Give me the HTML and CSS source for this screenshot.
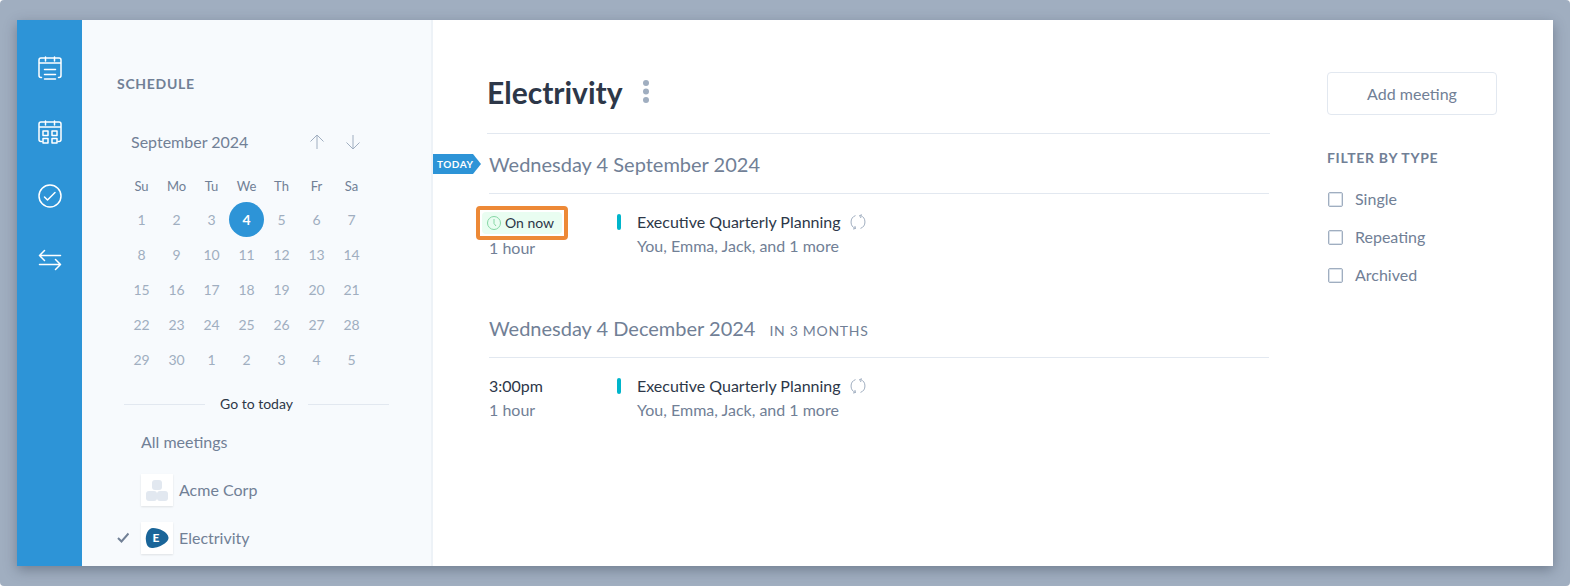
FILE: index.html
```html
<!DOCTYPE html>
<html lang="en">
<head>
<meta charset="utf-8">
<meta name="viewport" content="width=device-width, initial-scale=1">
<title>Schedule – Electrivity</title>
<link rel="stylesheet" href="styles.css">
</head>
<body>
<svg class="symbols" aria-hidden="true">
  <symbol id="repeat" viewBox="0 0 16 16">
    <path d="M5.500 14.500A6.900 6.900 0 0 1 5.500 1.600M10.500 1.500A6.900 6.900 0 0 1 10.500 14.400M3 15l2.500-.5-.6-2.500M11 4l-1.500-2.500L12 .8"/>
  </symbol>
</svg>
<div class="app">
  <nav class="rail" aria-label="Main">
    <a href="#schedule" aria-label="Schedule"><svg viewBox="0 0 24 24"><path d="M3.500 21.500H3a2 2 0 0 1-2-2V4a2 2 0 0 1 2-2h18a2 2 0 0 1 2 2v15.500a2 2 0 0 1-2 2h-.5M1 7h22M7.500 1v4M16.500 1v4M6.500 13.500h11M6.500 18.500h11M6.500 23h11"/></svg></a>
    <a href="#calendar" aria-label="Calendar"><svg viewBox="0 0 24 24"><path d="M3.500 21.500H3a2 2 0 0 1-2-2V4a2 2 0 0 1 2-2h18a2 2 0 0 1 2 2v15.500a2 2 0 0 1-2 2h-.5M1 7h22M7.500 1v4M16.500 1v4M5 11h5v4.500H5zM14 11h5v4.500h-5zM5 18.500h5V23H5zM14 18.500h5V23h-5z"/></svg></a>
    <a href="#tasks" aria-label="Tasks"><svg viewBox="0 0 24 24"><circle cx="12" cy="12" r="11"/><path d="M6.500 13l3 3L17 8.500"/></svg></a>
    <a href="#transfer" aria-label="Switch"><svg viewBox="0 0 24 24"><path d="M22.500 7.500h-21M6.500 2.500l-5 5 5 5M1.500 16.500h21M17.500 11.500l5 5-5 5"/></svg></a>
  </nav>

  <aside class="sidebar">
    <h2 class="label">SCHEDULE</h2>
    <div class="month">
      <span class="month-name">September 2024</span>
      <button class="arrow" type="button" aria-label="Previous month"><svg viewBox="0 0 16 16"><path d="M8 15V1M1.500 7.500L8 1l6.500 6.500"/></svg></button>
      <button class="arrow" type="button" aria-label="Next month"><svg viewBox="0 0 16 16"><path d="M8 1v14M1.500 8.500L8 15l6.500-6.500"/></svg></button>
    </div>
    <table class="calendar">
      <thead><tr><th>Su</th><th>Mo</th><th>Tu</th><th>We</th><th>Th</th><th>Fr</th><th>Sa</th></tr></thead>
      <tbody>
        <tr><td>1</td><td>2</td><td>3</td><td class="selected">4</td><td>5</td><td>6</td><td>7</td></tr>
        <tr><td>8</td><td>9</td><td>10</td><td>11</td><td>12</td><td>13</td><td>14</td></tr>
        <tr><td>15</td><td>16</td><td>17</td><td>18</td><td>19</td><td>20</td><td>21</td></tr>
        <tr><td>22</td><td>23</td><td>24</td><td>25</td><td>26</td><td>27</td><td>28</td></tr>
        <tr><td>29</td><td>30</td><td>1</td><td>2</td><td>3</td><td>4</td><td>5</td></tr>
      </tbody>
    </table>
    <div class="go-today"><button type="button">Go to today</button></div>
    <ul class="orgs">
      <li><a href="#all">All meetings</a></li>
      <li><a href="#acme"><span class="tile"><svg viewBox="0 0 32 32"><g fill="#e2e8f0"><rect x="11" y="6" width="10" height="10" rx="3"/><rect x="5" y="17" width="11" height="10" rx="3"/><rect x="16" y="17" width="11" height="10" rx="3"/></g></svg></span>Acme Corp</a></li>
      <li><svg class="tick" viewBox="0 0 12 12"><path d="M1 6l3.500 3.500L11.500 1.500"/></svg><a href="#electrivity"><span class="tile"><svg viewBox="0 0 32 32"><path d="M5 19C4 13 7 6 12 6c6 0 15 4 15.500 9.500C28 21 17 26 11 26c-4 0-5.500-3-6-7z" fill="#1a6599"/><text class="logo-letter" x="15" y="20" text-anchor="middle">E</text></svg></span>Electrivity</a></li>
    </ul>
  </aside>

  <main class="main">
    <div class="agenda">
      <header class="title-row">
        <h1>Electrivity</h1>
        <button class="more" type="button" aria-label="More options"><svg viewBox="0 0 6 23"><circle cx="3" cy="3" r="3"/><circle cx="3" cy="11.500" r="3"/><circle cx="3" cy="20" r="3"/></svg></button>
      </header>

      <section class="day">
        <h2 class="day-title"><span class="today">TODAY</span>Wednesday 4 September 2024</h2>
        <article class="event">
          <div class="when">
            <span class="highlight"><span class="on-now"><svg viewBox="0 0 14 14"><circle cx="7" cy="7" r="6.500"/><path d="M7 3v4.500l2 2.500"/></svg>On now</span></span>
            <span class="muted">1 hour</span>
          </div>
          <span class="bar"></span>
          <div class="what">
            <a class="event-name" href="#event-1">Executive Quarterly Planning<svg><use href="#repeat"/></svg></a>
            <span class="muted">You, Emma, Jack, and 1 more</span>
          </div>
        </article>
      </section>

      <section class="day">
        <h2 class="day-title">Wednesday 4 December 2024<small>IN 3 MONTHS</small></h2>
        <article class="event">
          <div class="when">
            <span>3:00pm</span>
            <span class="muted">1 hour</span>
          </div>
          <span class="bar"></span>
          <div class="what">
            <a class="event-name" href="#event-2">Executive Quarterly Planning<svg><use href="#repeat"/></svg></a>
            <span class="muted">You, Emma, Jack, and 1 more</span>
          </div>
        </article>
      </section>
    </div>

    <div class="tools">
      <button class="add" type="button">Add meeting</button>
      <fieldset class="filters">
        <legend class="label">FILTER BY TYPE</legend>
        <label><input type="checkbox">Single</label>
        <label><input type="checkbox">Repeating</label>
        <label><input type="checkbox">Archived</label>
      </fieldset>
    </div>
  </main>
</div>
</body>
</html>
```
FILE: styles.css
```css
* { box-sizing: border-box; }
html { background: #fff; }
body {
  margin: 0;
  min-height: 100vh;
  padding: 20px 17px;
  display: flex;
  font-family: Lato, "Open Sans", sans-serif;
  font-size: 16px;
  line-height: 24px;
  color: #2d3748;
  background: #a0aec0;
  border-radius: 4px;
}
h1, h2, ul { margin: 0; padding: 0; font-weight: 400; }
ul { list-style: none; }
a { color: inherit; text-decoration: none; }
button {
  padding: 0;
  border: 0;
  background: none;
  font: inherit;
  color: inherit;
  cursor: pointer;
}
svg { display: block; fill: none; stroke: none; flex: none; }
.symbols { position: absolute; width: 0; height: 0; }

.app {
  flex: 1;
  display: flex;
  background: #fff;
  box-shadow: 0 4px 12px rgba(45, 55, 72, 0.4);
}

/* Icon rail */
.rail {
  flex: none;
  width: 65px;
  padding-top: 36px;
  display: flex;
  flex-direction: column;
  align-items: center;
  gap: 40px;
  background: #2d94d7;
}
.rail svg {
  width: 24px;
  height: 24px;
  stroke: #fff;
  stroke-width: 1.5;
  stroke-linecap: round;
  stroke-linejoin: round;
}

/* Sidebar */
.sidebar {
  flex: none;
  width: 351px;
  padding: 52px 42px 0 35px;
  border-right: 2px solid #edf2f7;
  background: #f7fafd;
  color: #718096;
}
.label {
  font-size: 14px;
  font-weight: 700;
  letter-spacing: 0.05em;
  color: #718096;
}
.month {
  display: flex;
  align-items: center;
  gap: 20px;
  margin: 34px 20px 0 14px;
  padding-right: 8px;
}
.month-name { flex: 1; }
.arrow svg { width: 16px; height: 16px; stroke: #a0aec0; }
.calendar {
  margin: 16px 0 0 7px;
  border-collapse: collapse;
  table-layout: fixed;
  width: 245px;
  text-align: center;
}
.calendar th { height: 32px; padding: 0; font-size: 13px; font-weight: 400; }
.calendar td { height: 35px; padding: 0; font-size: 14px; color: #a0aec0; }
.calendar .selected { border-radius: 50%; background: #2d94d7; color: #fff; font-weight: 700; }
.go-today {
  display: flex;
  align-items: center;
  gap: 15px;
  margin: 15px 0 0 7px;
  font-size: 14px;
  color: #2d3748;
}
.go-today::before, .go-today::after { content: ""; flex: 1; height: 1px; background: #e2e8f0; }
.orgs { margin-top: 10px; }
.orgs li {
  display: flex;
  align-items: center;
  min-height: 32px;
  margin-bottom: 16px;
  padding-left: 24px;
}
.orgs a { display: flex; align-items: center; gap: 6px; }
.tile { width: 32px; height: 32px; background: #fff; box-shadow: 0 1px 2px rgba(0, 0, 0, 0.1); }
.tile svg { width: 32px; height: 32px; }
.logo-letter { fill: #fff; font-size: 12px; font-weight: 900; }
.tick { width: 12px; height: 12px; margin: 0 12px 0 -24px; stroke: #718096; stroke-width: 2; }
.orgs li:last-child { margin-bottom: 0; }

/* Agenda */
.main { flex: 1; display: flex; gap: 57px; padding: 52px 56px 0 54px; }
.agenda { flex: 1; min-width: 0; }
.title-row {
  display: flex;
  align-items: center;
  gap: 20px;
  height: 62px;
  padding-bottom: 22px;
  border-bottom: 1px solid #e2e8f0;
}
h1 { font-size: 30px; line-height: 40px; font-weight: 700; }
.more svg { width: 6px; height: 23px; fill: #a0aec0; }
.day { margin: 0 1px 0 2px; }
.day-title {
  position: relative;
  display: flex;
  align-items: baseline;
  gap: 14px;
  height: 60px;
  padding-top: 15px;
  line-height: 30px;
  font-size: 20px;
  color: #718096;
  border-bottom: 1px solid #e2e8f0;
}
.day-title small { font-size: 14px; letter-spacing: 0.05em; }
.today {
  position: absolute;
  top: 20px;
  left: -56px;
  width: 48px;
  padding-left: 4px;
  background: #2d94d7;
  clip-path: polygon(0 0, 40px 0, 100% 50%, 40px 100%, 0 100%);
  color: #fff;
  font-size: 10px;
  line-height: 20px;
  font-weight: 700;
  letter-spacing: 0.05em;
}
.event { display: flex; padding: 16px 0 38px; }
.when { width: 128px; display: flex; flex-direction: column; align-items: flex-start; }
.highlight {
  margin: -4px 0 -4px -13px;
  padding: 2px;
  border: 4px solid #ed8936;
  border-radius: 4px;
}
.on-now {
  display: flex;
  align-items: center;
  gap: 4px;
  padding: 0 8px 0 5px;
  border-radius: 4px;
  background: #e9fdf1;
  font-size: 14px;
  line-height: 22px;
}
.on-now svg { width: 14px; height: 14px; stroke: #85d6a4; }
.bar { width: 4px; height: 16px; margin: 4px 16px 0 0; border-radius: 2px; background: #00b5cb; }
.what { display: flex; flex-direction: column; }
.event-name { display: flex; align-items: center; gap: 9px; }
.event-name svg { width: 16px; height: 16px; stroke: #a0aec0; }
.muted { color: #718096; }

/* Tools */
.tools { flex: none; width: 170px; }
.add {
  width: 100%;
  height: 43px;
  border: 1px solid #e2e8f0;
  border-radius: 4px;
  color: #718096;
}
.filters { margin: 31px 0 0; padding: 0; border: 0; color: #718096; }
.filters legend { padding: 0; margin-bottom: 17px; white-space: nowrap; }
.filters label { display: flex; align-items: center; gap: 12px; margin-bottom: 14px; }
.filters input {
  appearance: none;
  width: 15px;
  height: 15px;
  margin: 0 0 0 1px;
  border: 1px solid #a0aec0;
  border-radius: 2px;
  background: #fff;
  box-shadow: inset 0 0 0 1px #dbe2ea;
}
.filters input:checked { background: #2d94d7; }
```
